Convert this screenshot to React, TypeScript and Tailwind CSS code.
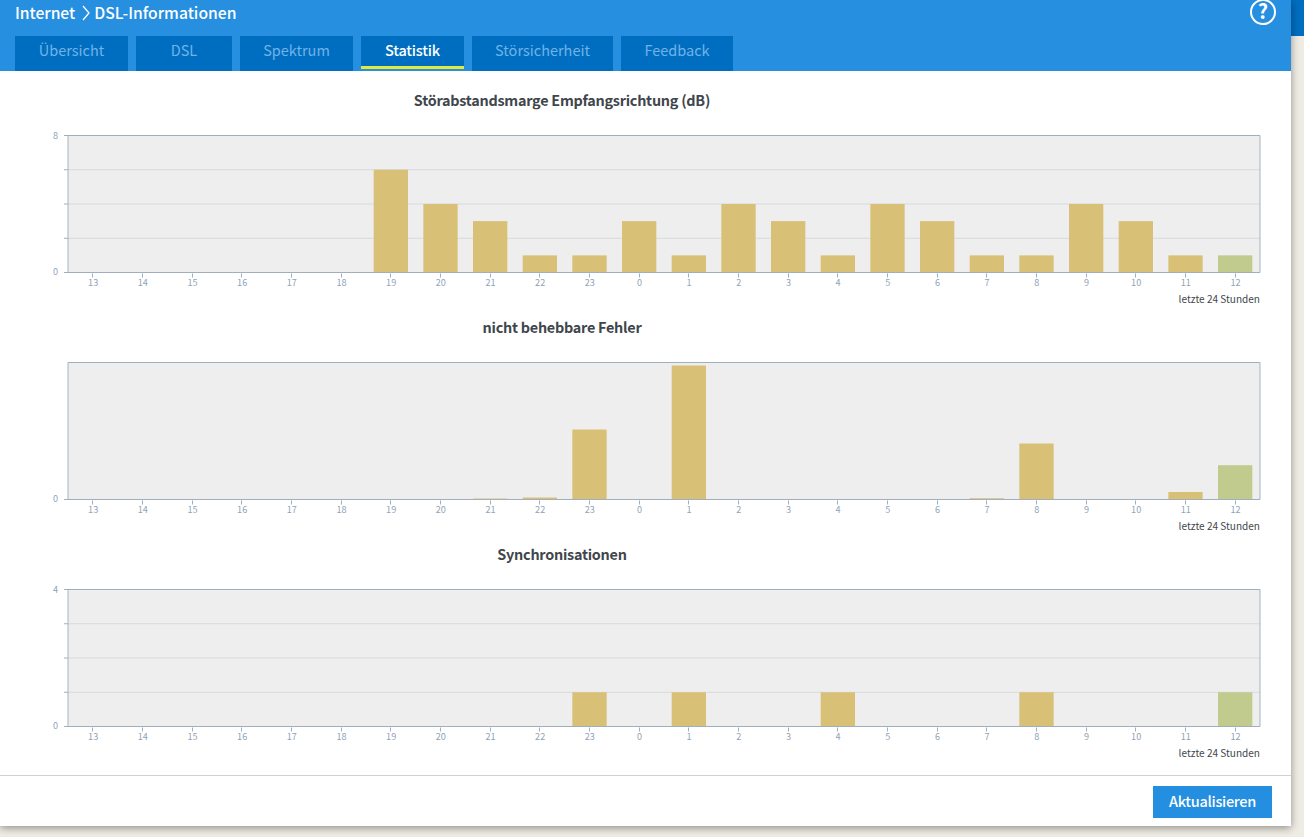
import clsx from "clsx";

type ChartProps = {
  title: string;
  values: number[];
  max: number;
  steps: number; // horizontal divisions, 0 hides the grid
};

const hours = [13, 14, 15, 16, 17, 18, 19, 20, 21, 22, 23, 0, 1, 2, 3, 4, 5, 6, 7, 8, 9, 10, 11, 12];

const tabs = [
  { label: "Übersicht", cls: "w-[113px]" },
  { label: "DSL", cls: "w-[96px]" },
  { label: "Spektrum", cls: "w-[113px]" },
  { label: "Statistik", cls: "w-[103px]", active: true },
  { label: "Störsicherheit", cls: "w-[141px]" },
  { label: "Feedback", cls: "w-[112px]" },
];

const charts: ChartProps[] = [
  {
    title: "Störabstandsmarge Empfangsrichtung (dB)",
    values: [0, 0, 0, 0, 0, 0, 6, 4, 3, 1, 1, 3, 1, 4, 3, 1, 4, 3, 1, 1, 4, 3, 1, 1],
    max: 8,
    steps: 4,
  },
  {
    title: "nicht behebbare Fehler",
    values: [0, 0, 0, 0, 0, 0, 0, 0, 1, 2, 70, 0, 134, 0, 0, 0, 0, 0, 1.3, 56, 0, 0, 7.5, 34.3],
    max: 137,
    steps: 0,
  },
  {
    title: "Synchronisationen",
    values: [0, 0, 0, 0, 0, 0, 0, 0, 0, 0, 1, 0, 1, 0, 0, 1, 0, 0, 0, 1, 0, 0, 0, 1],
    max: 4,
    steps: 4,
  },
];

const LEFT = 68;
const TOP = 15.5;
const WIDTH = 1192;
const HEIGHT = 137;
const BOTTOM = TOP + HEIGHT;
const SLOT = WIDTH / 24;
const BAR = 34.3;

function BarChart({ title, values, max, steps }: ChartProps) {
  const lines = Array.from({ length: steps + 1 }, (_, i) => BOTTOM - (i * HEIGHT) / (steps || 1));

  return (
    <section className="flex h-[227px] flex-col">
      <h2 className="h-[30px] w-[1124px] shrink-0 text-center text-[14.4px] leading-[20px] font-bold tracking-[-0.25px] text-[#3f464c]">
        {title}
      </h2>
      <svg width="1291" height="169" viewBox="0 0 1291 169" className="block shrink-0">
        <rect x={LEFT} y={TOP} width={WIDTH} height={HEIGHT} fill="#eeeeee" />
        {lines.slice(1, -1).map(y => (
          <path key={y} d={`M${LEFT} ${y}H${LEFT + WIDTH}`} stroke="#d6d9dc" />
        ))}
        {values.map((v, i) => {
          const h = (v / max) * HEIGHT;
          return (
            <rect key={i} x={LEFT + SLOT * (i + 0.5) - BAR / 2} y={BOTTOM - h} width={BAR} height={h}
                  fill={i === 23 ? "#c0cb8d" : "#d9c077"} />
          );
        })}
        <path d={`M${LEFT} ${TOP}V${BOTTOM}M${LEFT + WIDTH} ${TOP}V${BOTTOM}`} stroke="#a3b3c4" />
        <path d={`M${LEFT} ${TOP}H${LEFT + WIDTH}M64 ${BOTTOM}H${LEFT + WIDTH}`} stroke="#9fafbd" />
        {steps > 0 && lines.map(y => <path key={y} d={`M64 ${y}H68`} stroke="#9fafbd" />)}
        <g fill="#8fa3b8" fontSize="9.1">
          {steps > 0 && <text x="58" y={TOP + 3.5} textAnchor="end">{max}</text>}
          <text x="58" y={BOTTOM + 2.9} textAnchor="end">0</text>
          {hours.map((hour, i) => {
            const x = LEFT + SLOT * (i + 0.5);
            return (
              <g key={hour}>
                <path d={`M${Math.floor(x) + 0.5} ${BOTTOM + 1}v4`} stroke="#9fafbd" />
                <text x={x + 0.3} y={BOTTOM + 13.5} textAnchor="middle">{hour}</text>
              </g>
            );
          })}
        </g>
      </svg>
      <p className="w-[1260px] text-right text-[10.05px] leading-[19px] text-[#3f464c]">letzte 24 Stunden</p>
    </section>
  );
}

export default function App() {
  return (
    <div className="flex h-[837px] w-[1304px] items-start overflow-hidden bg-[#efece4] font-['Noto_Sans_CJK_SC','Noto_Sans',sans-serif]">
      <main className="z-10 flex h-[826px] w-[1291px] shrink-0 flex-col bg-white shadow-[0_2px_8px_rgba(0,0,0,0.4)]">
        <header className="h-[71px] shrink-0 bg-[#278fe0]">
          <div className="flex h-[36px] justify-between px-[15px] text-white">
            <div className="flex h-[26px] items-center text-[15.7px] font-medium">
              <span className="tracking-[-0.05px]">Internet</span>
              <svg width="9" height="16" viewBox="0 0 9 16" className="mr-[3px] ml-[7px]" fill="none" stroke="white" strokeWidth="1.3">
                <path d="M1 1l6 7-6 7" />
              </svg>
              <span>DSL-Informationen</span>
            </div>
            <svg width="26" height="26" viewBox="0 0 26 26" className="-mt-px overflow-visible">
              <circle cx="13" cy="13" r="12" fill="none" stroke="white" strokeWidth="2" />
              <text x="13" y="20" fill="white" fontSize="20" fontWeight="bold" textAnchor="middle">?</text>
            </svg>
          </div>
          <nav className="flex gap-2 pl-[15px]">
            {tabs.map(tab => (
              <button key={tab.label}
                      className={clsx("flex justify-center bg-[#006ec0] text-[14.5px] leading-[28px]", tab.cls,
                        tab.active ? "h-[33px] border-b-3 border-[#e3e83c] font-medium tracking-[-0.2px] text-white" : "h-[35px] text-[#70b3e8]")}>
                {tab.label}
              </button>
            ))}
          </nav>
        </header>
        <div className="h-[704px] shrink-0 pt-[19px]">
          {charts.map(chart => <BarChart key={chart.title} {...chart} />)}
        </div>
        <footer className="flex flex-1 justify-end border-t border-[#d2d2d4] pt-[10px] pr-[19px]">
          <button className="flex h-8 w-[119px] justify-center bg-[#248fe0] text-[14.5px] leading-[30px] font-medium tracking-[-0.3px] text-white">
            Aktualisieren
          </button>
        </footer>
      </main>
      <div className="h-[36px] flex-1 bg-[#006ec0]" />
    </div>
  );
}
